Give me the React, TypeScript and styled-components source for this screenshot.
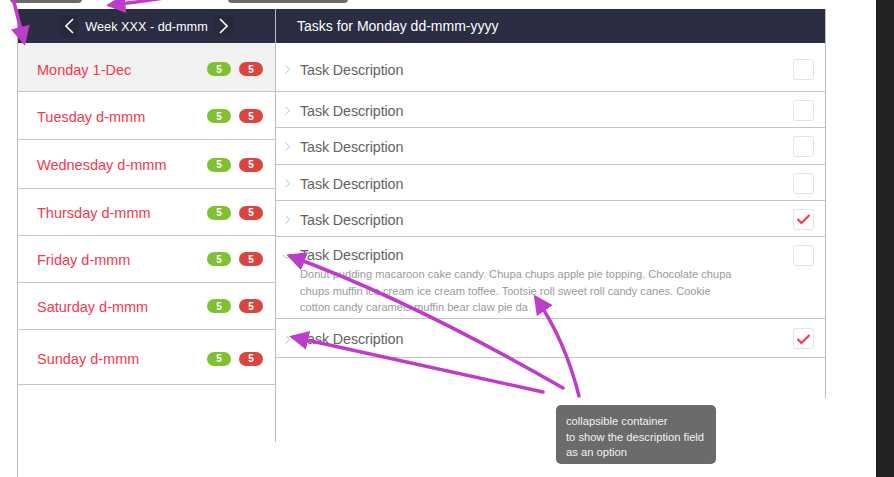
import styled, { createGlobalStyle } from 'styled-components';

const GlobalStyle = createGlobalStyle`
  *, *::before, *::after { box-sizing: border-box; }
  html, body { margin: 0; padding: 0; background: #fff; }
  body { font-family: "Helvetica Neue", "Liberation Sans", Arial, sans-serif; }
`;

const Screen = styled.div`
  position: relative;
  display: flex;
  width: 894px;
  height: 477px;
  overflow: hidden;
  background: #fff;
`;

const Canvas = styled.div`
  flex: 1;
  padding: 9px 0 0 17px;
`;

const DarkEdge = styled.div`
  width: 18px;
  background: #222;
`;

const Frame = styled.div`
  display: flex;
  align-items: flex-start;
  height: 468px;
  border-left: 1px solid #bdbdbd;
`;

const WeekPane = styled.section`
  width: 258px;
  height: 433px;
  border-right: 1px solid #bdbdbd;
`;

const TaskPane = styled.section`
  width: 550px;
  height: 389px;
  border-right: 1px solid #bdbdbd;
`;

const PaneHeader = styled.header<{ $centered?: boolean }>`
  display: flex;
  align-items: center;
  justify-content: ${({ $centered }) => ($centered ? 'center' : 'flex-start')};
  gap: 7px;
  height: 34px;
  padding: 0 21px;
  background: #2b2d42;
  color: #fff;
  font-size: 14px;
`;

const WeekTitle = styled.span`
  font-size: 12.7px;
  padding-top: 1px;
`;

const NavButton = styled.button`
  display: flex;
  align-items: center;
  justify-content: center;
  width: 18px;
  height: 22px;
  padding: 0;
  border: none;
  background: #27293c;
  color: #fff;
`;

const DayRow = styled.div<{ $active?: boolean }>`
  display: flex;
  align-items: center;
  padding: 0 12px 0 19px;
  border-bottom: 1px solid #c6c6c6;
  background: ${({ $active }) => ($active ? '#f2f2f2' : '#fff')};
`;

const DayName = styled.span`
  flex: 1;
  color: #f5384c;
  font-size: 14.5px;
`;

const Badges = styled.div`
  display: flex;
  gap: 8px;
  margin-top: -1px;
`;

const Badge = styled.span<{ $tone: 'green' | 'red' }>`
  display: flex;
  align-items: center;
  justify-content: center;
  width: 24px;
  height: 14px;
  border-radius: 7px;
  background: ${({ $tone }) => ($tone === 'green' ? '#7ec232' : '#d9463f')};
  color: #fff;
  font-size: 10px;
  font-weight: 700;
`;

const TaskRow = styled.div<{ $open?: boolean }>`
  display: flex;
  align-items: ${({ $open }) => ($open ? 'flex-start' : 'center')};
  padding: ${({ $open }) => ($open ? '8px 11px 0 6px' : '0 11px 0 9px')};
  border-bottom: 1px solid #c6c6c6;
`;

const Chevron = styled.span<{ $open?: boolean }>`
  display: flex;
  width: ${({ $open }) => ($open ? '18px' : '15px')};
  margin-top: ${({ $open }) => ($open ? '9px' : '1px')};
  color: #bdbdbd;
`;

const TaskBody = styled.div`
  flex: 1;
`;

const TaskTitle = styled.div<{ $open?: boolean }>`
  color: #626262;
  font-size: 14.3px;
  letter-spacing: -0.1px;
  line-height: 20px;
  margin-top: ${({ $open }) => ($open ? '0' : '1px')};
`;

const TaskDetail = styled.p`
  margin: 1px 0 0;
  max-width: 440px;
  color: #9a9a9a;
  font-size: 11.1px;
  line-height: 16.5px;
`;

const Checkbox = styled.span`
  display: flex;
  align-items: center;
  justify-content: center;
  width: 21px;
  height: 21px;
  border: 1.5px solid #dde6eb;
  border-radius: 3px;
  background: #fff;
`;

const Callout = styled.div`
  position: absolute;
  left: 556px;
  top: 405px;
  width: 160px;
  height: 59px;
  padding: 9px 8px 9px 10px;
  border-radius: 5px;
  background: #6b6b6b;
  color: #f2f2f2;
  font-size: 11.2px;
  line-height: 15.6px;
  white-space: nowrap;
`;

const CutCallout = styled.div<{ $left: number; $width: number }>`
  position: absolute;
  top: -10px;
  left: ${({ $left }) => $left}px;
  width: ${({ $width }) => $width}px;
  height: 13px;
  border-radius: 4px;
  background: #6a6a6a;
`;

const Annotations = styled.svg`
  position: absolute;
  inset: 0;
  pointer-events: none;
`;

const days = [
  { name: 'Monday 1-Dec', height: 49, shift: 5, active: true },
  { name: 'Tuesday d-mmm', height: 48, shift: 2 },
  { name: 'Wednesday d-mmm', height: 49, shift: 2 },
  { name: 'Thursday d-mmm', height: 47, shift: 2 },
  { name: 'Friday d-mmm', height: 47, shift: 1 },
  { name: 'Saturday d-mmm', height: 47, shift: 1 },
  { name: 'Sunday d-mmm', height: 55, shift: 4 },
];

const tasks = [
  { height: 49, shift: 4, done: false },
  { height: 36, shift: 1, done: false },
  { height: 37, shift: 0, done: false },
  { height: 36, shift: 1, done: false },
  { height: 36, shift: 1, done: true },
  {
    height: 82,
    shift: 0,
    done: false,
    detail:
      'Donut pudding macaroon cake candy. Chupa chups apple pie topping. Chocolate chupa chups muffin ice cream ice cream toffee. Tootsie roll sweet roll candy canes. Cookie cotton candy caramels muffin bear claw pie da',
  },
  { height: 39, shift: 1, done: true },
];

const ArrowLeft = () => (
  <svg width="9" height="16" viewBox="0 0 9 16">
    <polyline points="8,1 1,8 8,15" fill="none" stroke="#fff" strokeWidth="1.6" />
  </svg>
);

const ArrowRight = () => (
  <svg width="9" height="16" viewBox="0 0 9 16">
    <polyline points="1,1 8,8 1,15" fill="none" stroke="#fff" strokeWidth="1.6" />
  </svg>
);

const CaretRight = () => (
  <svg width="5" height="9" viewBox="0 0 5 9">
    <polyline points="0.5,0.5 4.5,4.5 0.5,8.5" fill="none" stroke="currentColor" strokeWidth="1" />
  </svg>
);

const CaretDown = () => (
  <svg width="9" height="5" viewBox="0 0 9 5">
    <polyline points="0.5,0.5 4.5,4.5 8.5,0.5" fill="none" stroke="currentColor" strokeWidth="1" />
  </svg>
);

const Tick = () => (
  <svg width="15" height="12" viewBox="0 0 15 12">
    <polyline points="1.5,6 5.5,10 13.5,2" fill="none" stroke="#f5384c" strokeWidth="2.2" />
  </svg>
);

const MAGENTA = '#bd3cc9';

const App = () => (
  <>
    <GlobalStyle />
    <Screen>
      <Canvas>
        <Frame>
          <WeekPane>
            <PaneHeader $centered>
              <NavButton>
                <ArrowLeft />
              </NavButton>
              <WeekTitle>Week XXX - dd-mmm</WeekTitle>
              <NavButton>
                <ArrowRight />
              </NavButton>
            </PaneHeader>
            {days.map((d) => (
              <DayRow key={d.name} $active={d.active} style={{ height: d.height, paddingTop: d.shift }}>
                <DayName>{d.name}</DayName>
                <Badges>
                  <Badge $tone="green">5</Badge>
                  <Badge $tone="red">5</Badge>
                </Badges>
              </DayRow>
            ))}
          </WeekPane>
          <TaskPane>
            <PaneHeader>Tasks for Monday dd-mmm-yyyy</PaneHeader>
            {tasks.map((t, i) => (
              <TaskRow
                key={i}
                $open={!!t.detail}
                style={{ height: t.height, paddingTop: t.detail ? 8 : t.shift }}
              >
                <Chevron $open={!!t.detail}>{t.detail ? <CaretDown /> : <CaretRight />}</Chevron>
                <TaskBody>
                  <TaskTitle $open={!!t.detail}>Task Description</TaskTitle>
                  {t.detail && <TaskDetail>{t.detail}</TaskDetail>}
                </TaskBody>
                <Checkbox>{t.done && <Tick />}</Checkbox>
              </TaskRow>
            ))}
          </TaskPane>
        </Frame>
      </Canvas>
      <DarkEdge />

      <CutCallout $left={10} $width={72} />
      <CutCallout $left={228} $width={120} />
      <Callout>
        collapsible container
        <br />
        to show the description field
        <br />
        as an option
      </Callout>

      <Annotations width="894" height="477" viewBox="0 0 894 477">
        <defs>
          <marker id="head" viewBox="0 0 10 10" refX="8" refY="5" markerWidth="5.5" markerHeight="5.5" orient="auto">
            <path d="M0,0 L10,5 L0,10 Z" fill={MAGENTA} />
          </marker>
        </defs>
        <g fill="none" stroke={MAGENTA} strokeWidth="3.5" strokeLinecap="round" markerEnd="url(#head)">
          <path d="M13,-2 L24,42" />
          <path d="M170,-3 Q140,2 110,5" />
          <path d="M563,388 Q410,300 290,256" />
          <path d="M543,392 L293,337" />
          <path d="M579,396 Q565,340 536,298" />
        </g>
      </Annotations>
    </Screen>
  </>
);

export default App;
